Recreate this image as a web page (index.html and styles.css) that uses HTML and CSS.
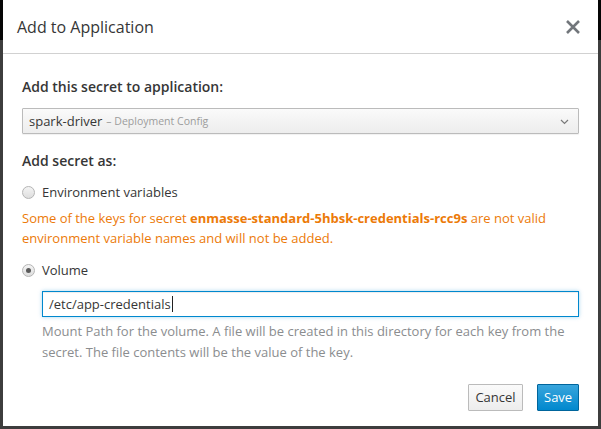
FILE: index.html
```html
<!DOCTYPE html>
<html lang="en">
<head>
<meta charset="utf-8">
<title>Add to Application</title>
<link rel="stylesheet" href="styles.css">
</head>
<body>
<div class="modal">
  <div class="modal-header">
    <h4 class="modal-title">Add to Application</h4>
    <button class="close" aria-label="Close">
      <svg width="16" height="14" viewBox="0 0 16 14"><path d="M2 1 L14 13 M14 1 L2 13" stroke="#72767b" stroke-width="2.6" fill="none"/></svg>
    </button>
  </div>
  <div class="modal-body">
    <div class="heading h1">Add this secret to application:</div>
    <div class="select">
      <span class="sel-name">spark-driver</span><span class="sel-kind">– Deployment Config</span>
      <svg class="chev" width="9" height="6" viewBox="0 0 9 6"><path d="M1 1 L4.5 4.5 L8 1" stroke="#7a7a7a" stroke-width="1.2" fill="none"/></svg>
    </div>
    <div class="heading h2">Add secret as:</div>
    <label class="radio r-env"><span class="circle"></span>Environment variables</label>
    <div class="warning">Some of the keys for secret <strong>enmasse-standard-5hbsk-credentials-rcc9s</strong> are not valid environment variable names and will not be added.</div>
    <label class="radio r-vol"><span class="circle checked"></span>Volume</label>
    <div class="volume">
      <div class="input">/etc/app-credentials<span class="caret"></span></div>
      <div class="help">Mount Path for the volume. A file will be created in this directory for each key from the secret. The file contents will be the value of the key.</div>
    </div>
    <div class="footer">
      <button class="btn btn-default">Cancel</button>
      <button class="btn btn-primary">Save</button>
    </div>
  </div>
</div>
</body>
</html>
```
FILE: styles.css
```css
html, body {
  margin: 0;
  padding: 0;
}
body {
  width: 601px;
  height: 429px;
  overflow: hidden;
  background: linear-gradient(#050505 0, #050505 40px, #3d3d3d 40px);
  font-family: "Open Sans", "Noto Sans", sans-serif;
  color: #363636;
}
.modal {
  margin-left: 3px;
  width: 595px;
  height: 426px;
  background: #fff;
  display: flex;
  flex-direction: column;
}
.modal-header {
  height: 53px;
  border-bottom: 1px solid #d1d1d1;
  display: flex;
  align-items: center;
  justify-content: space-between;
  padding: 0 17px 0 14px;
  flex: none;
}
.modal-title {
  margin: 0;
  font-size: 16px;
  font-weight: 400;
  line-height: 20px;
  color: #363636;
  padding-top: 1px;
}
.close {
  border: 0;
  background: none;
  padding: 0;
  margin: 0;
  width: 16px;
  height: 14px;
  display: block;
}
.close svg { display: block; }
.modal-body {
  padding: 0 19px;
  display: flex;
  flex-direction: column;
}
.heading {
  font-size: 14px;
  font-weight: 600;
  line-height: 20px;
  color: #363636;
}
.h1 { margin-top: 23px; }
.select {
  margin-top: 11px;
  height: 24px;
  border: 1px solid #bbb;
  border-radius: 1px;
  background: linear-gradient(#fafafa, #ededed);
  box-shadow: 0 1px 1px rgba(3,3,3,0.06);
  display: flex;
  align-items: center;
  padding: 0 9px 0 6px;
  position: relative;
}
.sel-name {
  font-size: 13px;
  color: #363636;
}
.sel-kind {
  font-size: 10.5px;
  color: #9c9c9c;
  margin-left: 4px;
}
.chev {
  margin-left: auto;
  margin-top: 2px;
}
.h2 { margin-top: 17px; }
.radio {
  display: flex;
  align-items: center;
  font-size: 13px;
  line-height: 20px;
  color: #363636;
}
.r-env { margin-top: 11px; }
.circle {
  width: 11px;
  height: 11px;
  border: 1px solid #b5b5b5;
  border-radius: 50%;
  background: linear-gradient(#f4f4f4, #dedede);
  margin-left: 0;
  margin-right: 7px;
  box-sizing: content-box;
  position: relative;
  flex: none;
}
.circle.checked::after {
  content: "";
  position: absolute;
  left: 3px;
  top: 3px;
  width: 5px;
  height: 5px;
  border-radius: 50%;
  background: #5a5a5a;
}
.warning {
  margin-top: 6px;
  font-size: 13px;
  line-height: 20px;
  color: #ec7a08;
}
.warning strong { font-weight: 700; }
.r-vol { margin-top: 12px; }
.volume {
  margin-left: 20px;
  margin-top: 11px;
}
.input {
  height: 24px;
  border: 1px solid #0088ce;
  box-shadow: inset 0 1px 1px rgba(3,3,3,0.075), 0 0 4px rgba(0,136,206,0.35);
  padding: 0 6px;
  font-size: 13px;
  line-height: 24px;
  color: #363636;
  display: flex;
  align-items: center;
}
.caret {
  display: inline-block;
  width: 1px;
  height: 16px;
  background: #222;
  margin-left: 1px;
}
.help {
  margin-top: 4px;
  font-size: 13px;
  line-height: 21px;
  color: #8b8d8f;
}
.footer {
  margin-top: 21px;
  display: flex;
  justify-content: flex-end;
  gap: 14px;
}
.btn {
  height: 27px;
  font-family: inherit;
  font-size: 13px;
  line-height: 25px;
  border-radius: 1px;
  padding: 0 6px;
  cursor: pointer;
}
.btn-default {
  width: 55px;
  background: linear-gradient(#fafafa, #ededed);
  border: 1px solid #bbb;
  color: #363636;
}
.btn-primary {
  width: 42px;
  background: linear-gradient(#39a5dc, #0088ce);
  border: 1px solid #00659c;
  color: #fff;
}
```
